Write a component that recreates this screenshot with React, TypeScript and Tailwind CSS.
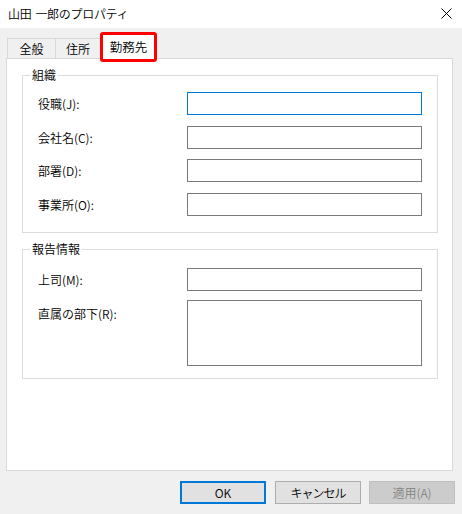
import React from "react";

const field = "h-[23px] w-full border border-[#7a7a7a] bg-white";

function Row({label, mt, focused}: {label: string; mt: string; focused?: boolean}) {
  return (
    <div className={`grid grid-cols-[149px_1fr] items-center ${mt}`}>
      <span className="leading-[16px]">{label}</span>
      <div className={focused ? "h-[23px] w-full border border-[#0078d7] bg-white" : field} />
    </div>
  );
}

export default function App() {
  return (
    <div className="w-[462px] h-[514px] bg-[#f0f0f0] flex flex-col text-[12px] font-[350] text-black font-['Noto_Sans_CJK_JP',sans-serif]">
      {/* title bar */}
      <div className="h-[28px] bg-white flex items-center justify-between pl-[8px] pr-[10px]">
        <span className="leading-[16px] tracking-[-0.3px]">
          山田<span className="ml-[4px]">一郎のプロパティ</span>
        </span>
        <svg width="11" height="11" viewBox="0 0 11 11" className="mt-[-1px]">
          <path d="M0.5 0.5 L10.5 10.5 M10.5 0.5 L0.5 10.5" stroke="#000" strokeWidth="1" />
        </svg>
      </div>

      <div className="flex flex-col pl-[6px] pr-[9px] pt-[4px]">
        {/* tabs */}
        <div className="h-[26px] flex items-end pl-[1px]">
          <div className="h-[20px] w-[49px] border-l border-t border-r border-[#d9d9d9] flex items-center justify-center leading-[16px]">
            全般
          </div>
          <div className="h-[20px] w-[44px] border-t border-[#d9d9d9] flex items-center justify-center leading-[16px]">
            住所
          </div>
          <div className="relative z-10 h-[30px] w-[57px] -mb-[4px] border-[3px] border-[#ff0000] rounded-[3px] bg-white flex items-center justify-center leading-[16px] text-[12.5px]">
            勤務先
          </div>
        </div>

        {/* panel */}
        <div className="h-[413px] border border-[#d9d9d9] bg-white pl-[15px] pr-[14px] pt-[8px]">
          <fieldset className="border border-[#dcdcdc] p-0 m-0">
            <legend className="ml-[7px] px-[2px] leading-[16px]">組織</legend>
            <div className="pt-[9px] pb-[16px] pl-[15px] pr-[15px]">
              <Row label="役職(J):" mt="mt-0" focused />
              <Row label="会社名(C):" mt="mt-[11px]" />
              <Row label="部署(D):" mt="mt-[10px]" />
              <Row label="事業所(O):" mt="mt-[11px]" />
            </div>
          </fieldset>

          <fieldset className="mt-[8px] border border-[#dcdcdc] p-0 m-0">
            <legend className="ml-[7px] px-[2px] leading-[16px]">報告情報</legend>
            <div className="pt-[11px] pb-[12px] pl-[15px] pr-[15px]">
              <Row label="上司(M):" mt="mt-0" />
              <div className="grid grid-cols-[149px_1fr] items-start mt-[9px]">
                <span className="leading-[16px] pt-[6px]">直属の部下(R):</span>
                <div className="h-[66px] w-full border border-[#7a7a7a] bg-white" />
              </div>
            </div>
          </fieldset>
        </div>

        {/* buttons */}
        <div className="flex justify-end mt-[10px] mr-[-2px]">
          <button className="h-[23px] w-[86px] border-2 border-[#0078d7] bg-[#e1e1e1] leading-[16px]">
            OK
          </button>
          <button className="ml-[9px] h-[23px] w-[86px] border border-[#adadad] bg-[#e1e1e1] leading-[16px] tracking-[-1px]">
            キャンセル
          </button>
          <button className="ml-[8px] h-[23px] w-[86px] border border-[#bfbfbf] bg-[#cccccc] text-[#838383] leading-[16px]">
            適用(A)
          </button>
        </div>
      </div>
    </div>
  );
}
